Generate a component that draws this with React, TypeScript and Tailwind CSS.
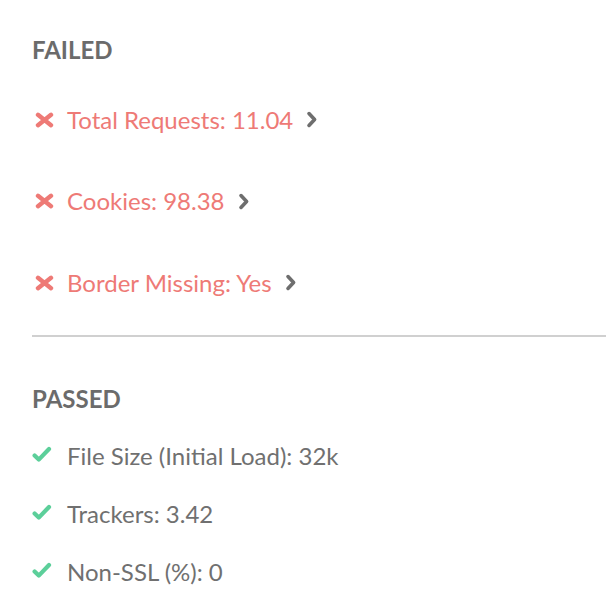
import { ReactNode } from 'react';

// ---------------------------------------------------------------------------
// Icons
// ---------------------------------------------------------------------------

function CrossIcon() {
  return (
    <svg width="19" height="16" viewBox="0 0 19 16" className="ml-[3px] block">
      <path d="M3 2.8 L16 13.2 M16 2.8 L3 13.2" stroke="#ee7a76" strokeWidth="4.4" strokeLinecap="round" fill="none" />
    </svg>
  );
}

function CheckIcon() {
  return (
    <svg width="20" height="18" viewBox="0 0 20 18" className="ml-0 mt-[-1px] block">
      <path d="M2.6 9.4 L6.8 13.6 L17 3" stroke="#5ccf9a" strokeWidth="4.2" strokeLinecap="round" strokeLinejoin="round" fill="none" />
    </svg>
  );
}

function Chevron() {
  return (
    <svg width="12" height="17" viewBox="0 0 12 17" className="ml-[13px] block">
      <path d="M3 2.6 L8.6 8.5 L3 14.4" stroke="#6e6e6e" strokeWidth="3.6" strokeLinecap="round" strokeLinejoin="round" fill="none" />
    </svg>
  );
}

// ---------------------------------------------------------------------------
// Rows
// ---------------------------------------------------------------------------

function Row({ icon, children, className }: { icon: ReactNode; children: ReactNode; className: string }) {
  return (
    <li className={`flex items-center ${className}`}>
      <span className="w-[35px] shrink-0">{icon}</span>
      {children}
    </li>
  );
}

const failed = ['Total Requests: 11.04', 'Cookies: 98.38', 'Border Missing: Yes'];
const passed = ['File Size (Initial Load): 32k', 'Trackers: 3.42', 'Non-SSL (%): 0'];

export default function App() {
  return (
    <div className="w-[606px] h-[606px] bg-white pl-8 pt-[36px] overflow-hidden" style={{ fontFamily: 'Lato, "Open Sans", sans-serif' }}>
      <h2 className="text-[24px] leading-[28px] font-bold text-[#6b6b6b]">FAILED</h2>
      <ul className="mt-[15px]">
        {failed.map((t) => (
          <Row key={t} icon={<CrossIcon />} className="h-[81.5px]">
            <span className="text-[24px] leading-[28px] text-[#ee7a76]">{t}</span>
            <Chevron />
          </Row>
        ))}
      </ul>
      <div className="mt-[11px] h-[2px] bg-[#d0d0d0]" />
      <h2 className="mt-[48px] text-[24px] leading-[28px] font-bold text-[#6b6b6b]">PASSED</h2>
      <ul className="mt-[14px]">
        {passed.map((t) => (
          <Row key={t} icon={<CheckIcon />} className="h-[58px]">
            <span className="text-[24px] leading-[28px] text-[#707070]">{t}</span>
          </Row>
        ))}
      </ul>
    </div>
  );
}
